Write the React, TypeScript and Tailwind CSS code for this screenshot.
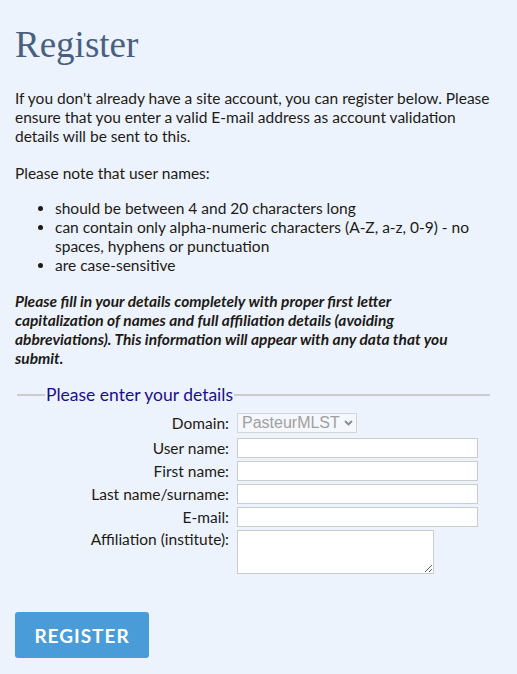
import { Fragment } from "react";

export default function App() {
  const rows = ["User name:", "First name:", "Last name/surname:", "E-mail:"];
  return (
    <div className="min-h-[674px] w-full bg-[#ecf3fd] px-[15px] pt-[24px] pb-4 text-[#1e1a16] text-[15.5px] leading-[19px] [font-family:Lato,'Noto_Sans',sans-serif]">
      <h1 className="text-[37px] leading-[42px] text-[#4a5f7f] [font-family:'Liberation_Serif',serif] font-normal">
        Register
      </h1>
      <p className="mt-[23px]">
        If you don't already have a site account, you can register below. Please ensure that you enter a valid E-mail address as account validation details will be sent to this.
      </p>
      <p className="mt-[18px]">Please note that user names:</p>
      <ul className="mt-[16px] list-disc pl-[40px]">
        <li>should be between 4 and 20 characters long</li>
        <li>can contain only alpha-numeric characters (A-Z, a-z, 0-9) - no spaces, hyphens or punctuation</li>
        <li>are case-sensitive</li>
      </ul>
      <p className="mt-[17px] italic font-bold">
        Please fill in your details completely with proper first letter
        <br />
        capitalization of names and full affiliation details (avoiding
        <br />
        abbreviations). This information will appear with any data that you
        <br />
        submit.
      </p>
      <fieldset className="mt-[17px] ml-[2px] mr-[12px] border-t-2 border-[#cccccc] pt-[9px]">
        <legend className="ml-[28px] px-[1px] text-[17.5px] text-[#1c0e8a]">Please enter your details</legend>
        <div className="grid grid-cols-[212px_1fr] gap-x-[8px] gap-y-[3px] items-center">
          <label className="text-right mb-[2px]">Domain:</label>
          <div className="relative w-[120px] mb-[2px]">
            <select
              disabled
              className="block h-[20px] w-[120px] appearance-none border border-[#d6d6d6] bg-[#f4f7fb] pl-[4px] text-[16px] leading-[18px] text-[#a0a0a0] [font-family:'Liberation_Sans',Arial,sans-serif]"
              defaultValue="PasteurMLST"
            >
              <option>PasteurMLST</option>
            </select>
            <svg className="pointer-events-none absolute right-[4px] top-[7px]" width="9" height="6" viewBox="0 0 9 6">
              <path d="M1 1 L4.5 4.5 L8 1" fill="none" stroke="#8a8a8a" strokeWidth="1.8" />
            </svg>
          </div>
          {rows.map((r) => (
            <Fragment key={r}>
              <label className="text-right">{r}</label>
              <input className="h-[20px] w-[241px] border border-[#cccccc] bg-white" />
            </Fragment>
          ))}
          <label className="text-right self-start">Affiliation (institute):</label>
          <textarea className="h-[44px] w-[197px] border border-[#cccccc] bg-white" />
        </div>
      </fieldset>
      <button className="mt-[38px] h-[46px] w-[134px] rounded-[3px] bg-[#4a9cd8] text-[19px] font-bold tracking-[1px] text-white">
        REGISTER
      </button>
    </div>
  );
}
